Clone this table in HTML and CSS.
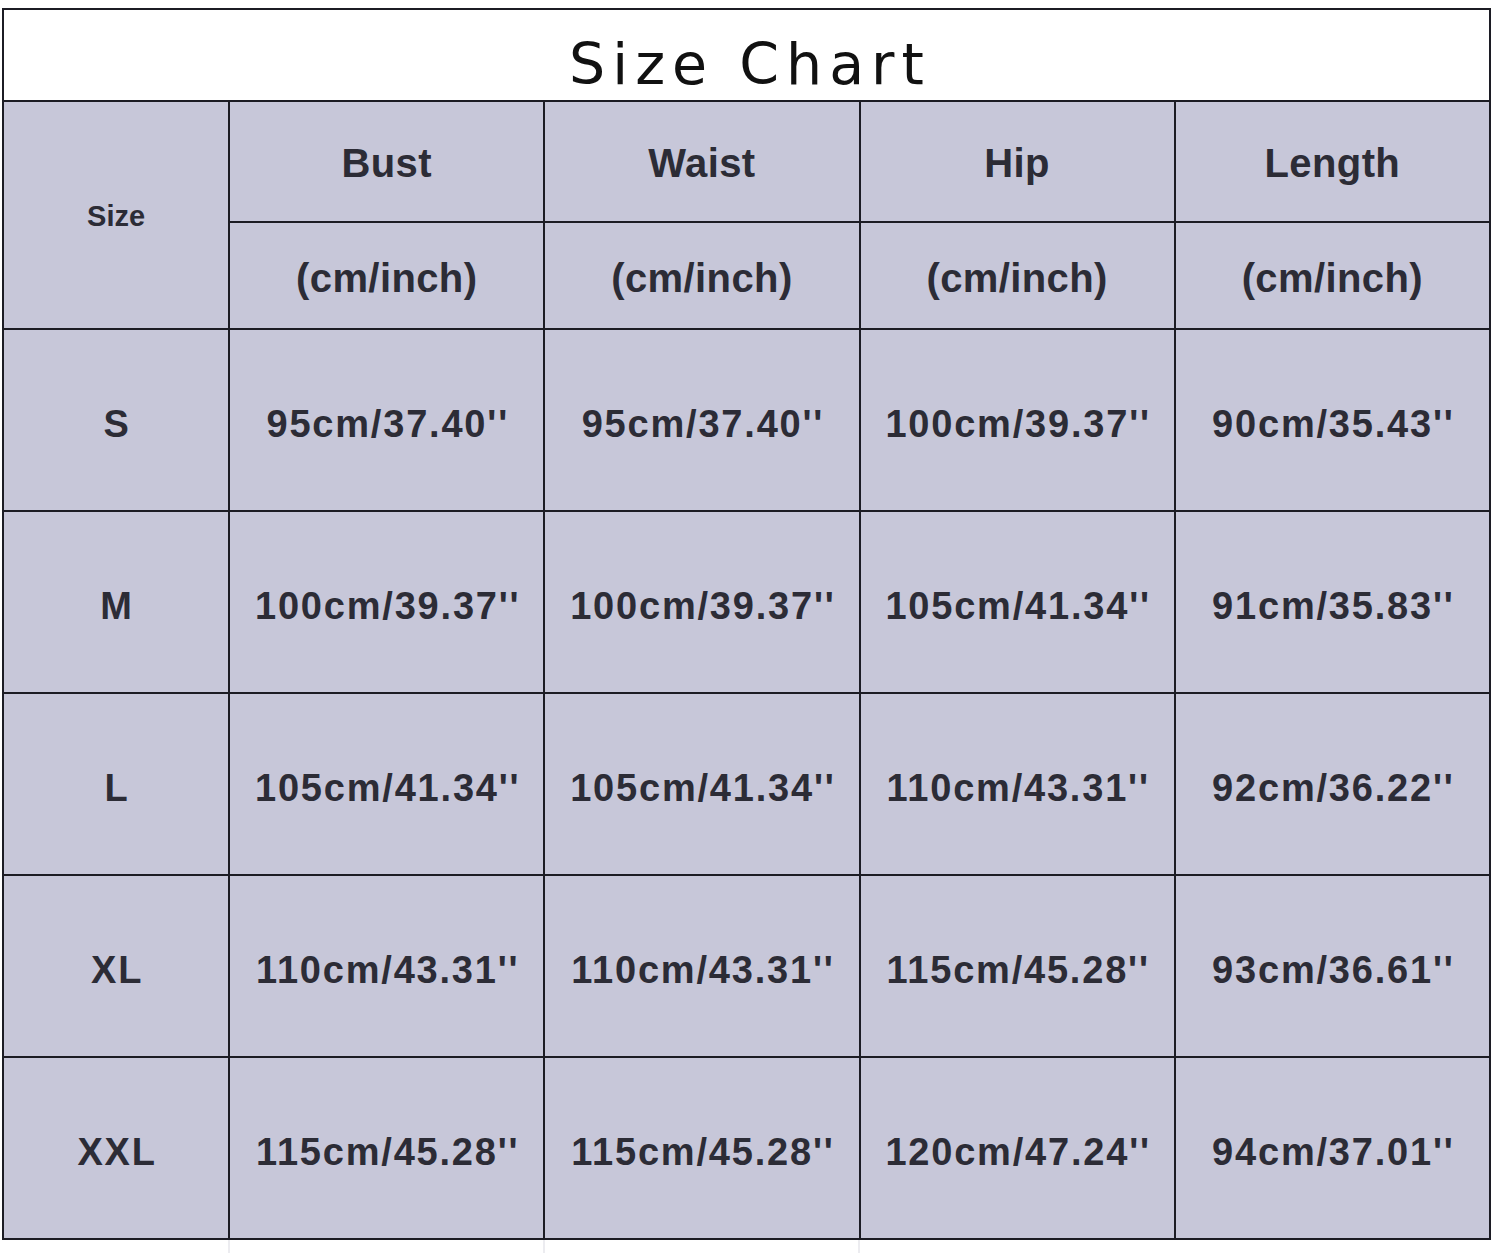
FILE: index.html
```html
<!DOCTYPE html>
<html>
<head>
<meta charset="utf-8">
<link rel="stylesheet" href="styles.css">
</head>
<body>
<div class="page">
  <table class="chart">
    <colgroup>
      <col class="c-size"><col class="c-val"><col class="c-val"><col class="c-val"><col class="c-val">
    </colgroup>
    <tr class="r-title"><th colspan="5" class="title">Size Chart</th></tr>
    <tr class="r-h1">
      <th rowspan="2" class="size-h">Size</th>
      <th>Bust</th><th>Waist</th><th>Hip</th><th>Length</th>
    </tr>
    <tr class="r-h2">
      <th>(cm/inch)</th><th>(cm/inch)</th><th>(cm/inch)</th><th>(cm/inch)</th>
    </tr>
    <tr class="r-d"><td>S</td><td>95cm/37.40''</td><td>95cm/37.40''</td><td>100cm/39.37''</td><td>90cm/35.43''</td></tr>
    <tr class="r-d"><td>M</td><td>100cm/39.37''</td><td>100cm/39.37''</td><td>105cm/41.34''</td><td>91cm/35.83''</td></tr>
    <tr class="r-d"><td>L</td><td>105cm/41.34''</td><td>105cm/41.34''</td><td>110cm/43.31''</td><td>92cm/36.22''</td></tr>
    <tr class="r-d"><td>XL</td><td>110cm/43.31''</td><td>110cm/43.31''</td><td>115cm/45.28''</td><td>93cm/36.61''</td></tr>
    <tr class="r-d"><td>XXL</td><td>115cm/45.28''</td><td>115cm/45.28''</td><td>120cm/47.24''</td><td>94cm/37.01''</td></tr>
  </table>
  <div class="tail">
    <span class="t1"></span><span class="t2"></span><span class="t3"></span><span class="t4"></span>
  </div>
</div>
</body>
</html>
```
FILE: styles.css
```css
html, body {
  margin: 0;
  padding: 0;
  background: #ffffff;
}
.page {
  padding: 8px 0 0 2px;
  width: 1498px;
}
.chart {
  border-collapse: collapse;
  width: 1489px;
  table-layout: fixed;
  font-family: "Liberation Sans", Arial, sans-serif;
  font-weight: bold;
  color: #2c2c36;
}
.c-size { width: 226px; }
.c-val { width: 315px; }
.chart th, .chart td {
  border: 2px solid #1c1c24;
  background: #c7c7d9;
  text-align: center;
  vertical-align: middle;
  padding: 0;
}
.chart .title {
  background: #ffffff;
  font-family: "DejaVu Sans", sans-serif;
  font-weight: normal;
  font-size: 57px;
  letter-spacing: 7px;
  color: #111111;
  padding: 17px 0 0 7px;
}
.r-title { height: 92px; }
.r-h1 { height: 121px; }
.r-h2 { height: 107px; }
.r-d { height: 182px; }
.r-h1 th, .r-h2 th {
  font-size: 40px;
  letter-spacing: 0.4px;
}
.r-h1 th { padding-top: 4px; }
.r-h2 th { padding-top: 6px; }
.chart .size-h {
  font-size: 29px;
  letter-spacing: 0;
  padding-top: 2px;
}
.r-d td {
  font-size: 38px;
  letter-spacing: 1.8px;
  padding: 8px 0 0 2px;
}
.tail {
  display: flex;
  height: 13px;
  margin-left: 226px;
}
.tail span {
  width: 315px;
  border-left: 2px solid #ececf0;
  box-sizing: border-box;
}
.tail .t4 { border-left: none; }
```
